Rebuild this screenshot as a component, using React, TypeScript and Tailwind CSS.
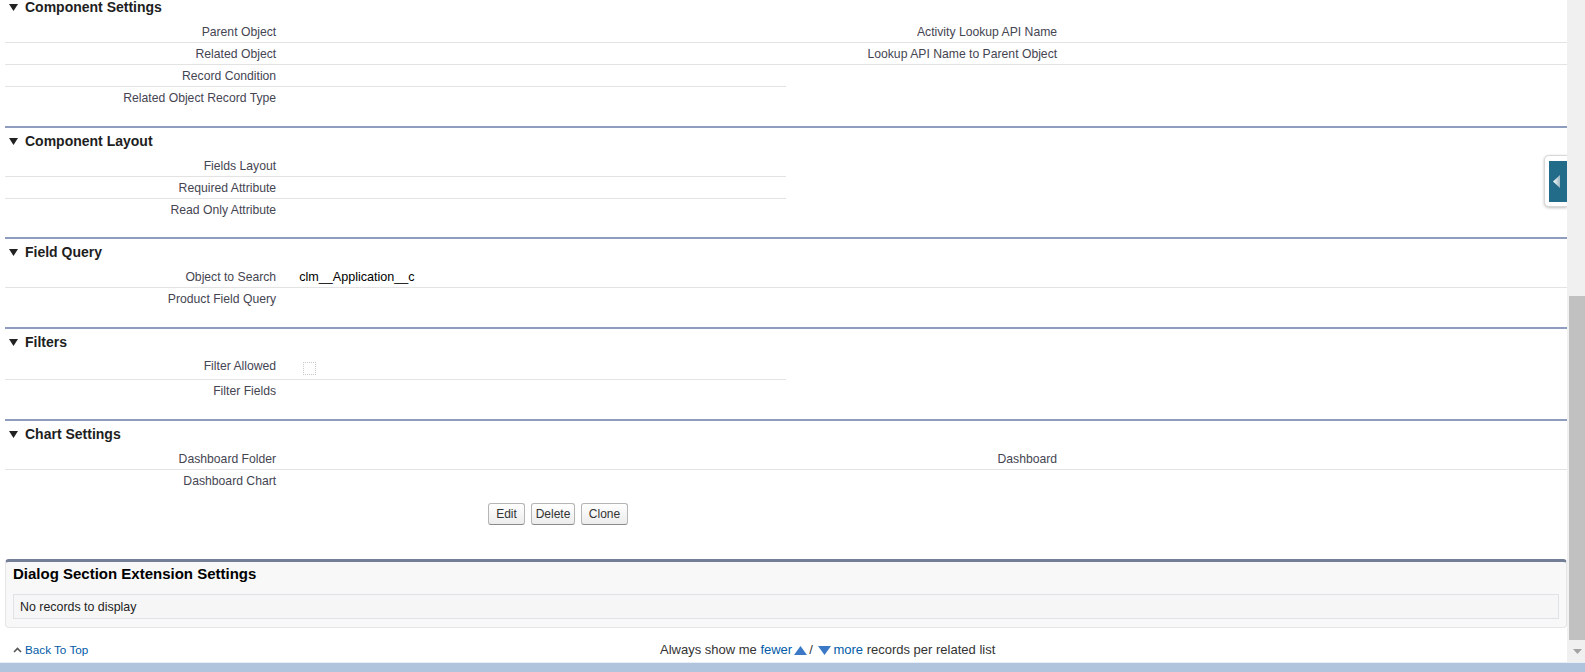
import React from "react";

type Line = "none" | "left" | "full";

function Caret() {
  return (
    <svg width="9" height="7" viewBox="0 0 9 7" className="mr-[7px] shrink-0">
      <polygon points="0,0 9,0 4.5,7" fill="#222" />
    </svg>
  );
}

function SectionHeader({ title }: { title: string }) {
  return (
    <div className="flex h-[27px] items-center pl-[4px] text-[14px] font-bold text-[#1e1e1e]">
      <Caret />
      {title}
    </div>
  );
}

function Row({
  label,
  value,
  rightLabel,
  rightValue,
  line = "none",
  tall = false,
}: {
  label?: string;
  value?: React.ReactNode;
  rightLabel?: string;
  rightValue?: React.ReactNode;
  line?: Line;
  tall?: boolean;
}) {
  const leftBorder = line === "none" ? "" : "border-b border-[#e3e3e3]";
  const rightBorder = line === "full" ? "border-b border-[#e3e3e3]" : "";
  const height = tall ? "h-[24px]" : "h-[22px]";
  const labelPad = tall ? "pt-[2px]" : "pt-[3px]";

  return (
    <div className={`grid grid-cols-[18%_32%_18%_32%] ${height}`}>
      <div className={`whitespace-nowrap pr-[10px] ${labelPad} text-right text-[12.2px] leading-[16px] text-[#454552] ${leftBorder}`}>
        {label}
      </div>
      <div className={`pl-[13px] pt-[3px] text-[12.6px] leading-[16px] text-black ${leftBorder}`}>
        {value}
      </div>
      <div className={`whitespace-nowrap pr-[10px] pt-[3px] text-right text-[12.2px] leading-[16px] text-[#454552] ${rightBorder}`}>
        {rightLabel}
      </div>
      <div className={`pl-[13px] pt-[3px] text-[12.6px] leading-[16px] text-black ${rightBorder}`}>
        {rightValue}
      </div>
    </div>
  );
}

function Divider() {
  return <div className="h-[2px] bg-[#8e9dbe]" />;
}

function Button({ children, w }: { children: string; w: string }) {
  return (
    <button
      className={`h-[22px] ${w} rounded-[3px] border border-[#b5b5b5] border-b-[#8a8a8a] bg-gradient-to-b from-white to-[#ececec] text-center text-[12px] text-[#333]`}
    >
      {children}
    </button>
  );
}

function TriUp() {
  return (
    <svg width="13" height="9" viewBox="0 0 13 9" className="mx-[2px] inline-block">
      <polygon points="6.5,0 13,9 0,9" fill="#3b78c6" />
    </svg>
  );
}

function TriDown() {
  return (
    <svg width="13" height="9" viewBox="0 0 13 9" className="mx-[2px] inline-block">
      <polygon points="0,0 13,0 6.5,9" fill="#3b78c6" />
    </svg>
  );
}

export default function App() {
  return (
    <div className="h-[672px] w-[1585px] overflow-hidden bg-white font-['Liberation_Sans',Arial,sans-serif]">
      <div className="flex h-[662px]">
        <div className="relative flex-1 overflow-hidden pl-[5px]">
          <div className="mt-[-6px]">
            <SectionHeader title="Component Settings" />
            <Row label="Parent Object" rightLabel="Activity Lookup API Name" line="full" />
            <Row label="Related Object" rightLabel="Lookup API Name to Parent Object" line="full" />
            <Row label="Record Condition" line="left" />
            <Row label="Related Object Record Type" />
            <div className="h-[17px]" />
          </div>

          <Divider />
          <SectionHeader title="Component Layout" />
          <Row label="Fields Layout" line="left" />
          <Row label="Required Attribute" line="left" />
          <Row label="Read Only Attribute" />
          <div className="h-[16px]" />

          <Divider />
          <SectionHeader title="Field Query" />
          <Row label="Object to Search" value="clm__Application__c" line="full" />
          <Row label="Product Field Query" />
          <div className="h-[17px]" />

          <Divider />
          <SectionHeader title="Filters" />
          <Row
            label="Filter Allowed"
            line="left"
            tall
            value={
              <div className="ml-[4px] mt-[3px] h-[13px] w-[13px] border border-dotted border-[#c9c9c9] bg-white" />
            }
          />
          <Row label="Filter Fields" />
          <div className="h-[17px]" />

          <Divider />
          <SectionHeader title="Chart Settings" />
          <Row label="Dashboard Folder" rightLabel="Dashboard" line="full" />
          <Row label="Dashboard Chart" />

          <div className="mt-[11px] flex gap-[6px] pl-[483px]">
            <Button w="w-[37px]">Edit</Button>
            <Button w="w-[44px]">Delete</Button>
            <Button w="w-[47px]">Clone</Button>
          </div>

          <div className="mt-[34px] rounded-[4px] border border-t-[3px] border-[#e6e6e6] border-t-[#747e96] bg-[#f8f8f8] px-[7px] pb-[8px]">
            <div className="h-[32px] pt-[4px] text-[15px] font-bold leading-[16px] text-black">
              Dialog Section Extension Settings
            </div>
            <div className="flex h-[25px] items-center border border-[#e0e3e5] bg-[#f6f6f6] pl-[6px] pt-[2px] text-[12.4px] text-[#222]">
              No records to display
            </div>
          </div>

          <div className="flex pt-[14px] text-[13px] leading-[16px]">
            <div className="flex items-center pl-[8px] text-[11.7px] text-[#015ba7]">
              <svg width="9" height="6" viewBox="0 0 9 6" className="mr-[3px]">
                <polyline points="1,5 4.5,1.5 8,5" fill="none" stroke="#555" strokeWidth="1.6" />
              </svg>
              Back To Top
            </div>
            <div className="flex-1 text-center text-[#333]">
              Always show me <span className="text-[#015ba7]">fewer</span>
              <TriUp />/ <TriDown />
              <span className="text-[#015ba7]">more</span> records per related list
            </div>
          </div>

          <div className="absolute left-[1544px] top-[155px] h-[52px] w-[23px] rounded-l-[5px] border border-r-0 border-[#d8d8d8] bg-white py-[5px] pl-[4px] shadow-[0_1px_3px_rgba(0,0,0,0.25)]">
            <div className="flex h-[41px] w-full items-center bg-[#236c89] pl-[4px]">
              <svg width="7" height="13" viewBox="0 0 7 13">
                <defs>
                  <linearGradient id="tg" x1="0" x2="1" y1="0" y2="0">
                    <stop offset="0" stopColor="#ffffff" />
                    <stop offset="1" stopColor="#9fb9c4" />
                  </linearGradient>
                </defs>
                <polygon points="7,0 7,13 0,6.5" fill="url(#tg)" />
              </svg>
            </div>
          </div>
        </div>

        <div className="flex w-[18px] flex-col bg-[#f0f0f0] pl-[2px]">
          <div className="h-[296px]" />
          <div className="h-[344px] bg-[#c1c1c1]" />
          <div className="flex flex-1 items-center justify-center">
            <svg width="9" height="5" viewBox="0 0 9 5">
              <polygon points="0,0 9,0 4.5,5" fill="#a3a3a3" />
            </svg>
          </div>
        </div>
      </div>
      <div className="h-[10px] border-t border-[#e8eef6] bg-[#b0c4de]" />
    </div>
  );
}
